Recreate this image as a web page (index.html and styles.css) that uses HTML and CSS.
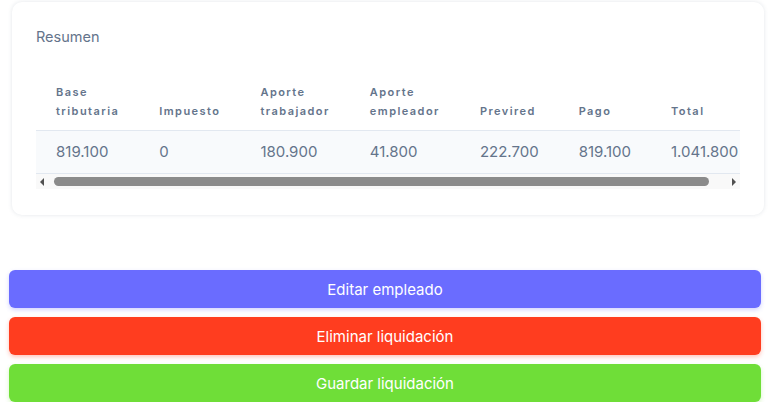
FILE: index.html
```html
<!DOCTYPE html>
<html lang="es">
<head>
    <meta charset="UTF-8">
    <meta name="viewport" content="width=device-width, initial-scale=1.0">
    <title>Liquidación</title>
    <link rel="stylesheet" href="styles.css">
</head>
<body>

    <div id="page">
        <!-- Resumen card -->
        <div class="card">
            <h2 class="card-title">Resumen</h2>
            <div class="table-wrap">
                <table class="summary">
                    <thead>
                        <tr>
                            <th>Base<br>tributaria</th>
                            <th>Impuesto</th>
                            <th>Aporte<br>trabajador</th>
                            <th>Aporte<br>empleador</th>
                            <th>Previred</th>
                            <th>Pago</th>
                            <th>Total</th>
                        </tr>
                    </thead>
                    <tbody>
                        <tr>
                            <td>819.100</td>
                            <td>0</td>
                            <td>180.900</td>
                            <td>41.800</td>
                            <td>222.700</td>
                            <td>819.100</td>
                            <td>1.041.800</td>
                        </tr>
                    </tbody>
                </table>
            </div>
            <!-- horizontal scrollbar of the table -->
            <div class="scrollbar">
                <span class="scroll-btn"><span class="arrow-left"></span></span>
                <span class="scroll-track"><span class="scroll-thumb"></span></span>
                <span class="scroll-btn"><span class="arrow-right"></span></span>
            </div>
        </div>

        <!-- Actions -->
        <div class="actions">
            <button class="btn btn-edit">Editar empleado</button>
            <button class="btn btn-delete">Eliminar liquidación</button>
            <button class="btn btn-save">Guardar liquidación</button>
        </div>
    </div>

</body>
</html>
```

FILE: styles.css
```css
body {
    margin: 0;
    font-family: "Inter", "Noto Sans", Arial, sans-serif;
    background: #fff;
    color: #64748b;
}
#page { padding: 2px 11px 0 9px; }

.card {
    margin-left: 3px;
    background: #fff;
    border-radius: 10px;
    box-shadow: 0 0 4px rgba(100, 116, 139, 0.18);
    padding: 26px 24px 26px 24px;
}
.card-title { margin: 0 0 38px 0; font-size: 14.5px; font-weight: 400; color: #64748b; }

.table-wrap { overflow: hidden; }
.summary { border-collapse: collapse; white-space: nowrap; }
.summary th {
    text-align: left; vertical-align: bottom; font-size: 11px; font-weight: 600;
    letter-spacing: 1.45px; line-height: 19px; padding: 0 20px 9px 20px; color: #64748b;
    border-bottom: 1px solid #e2e8f0;
}
.summary td {
    font-size: 15px; padding: 11px 20px 11px 20px; line-height: 20px;
    background: #f8fafc; border-bottom: 1px solid #e2e8f0; color: #64748b;
}

.scrollbar { display: flex; height: 15px; background: #f9f9f9; }
.scroll-btn { width: 12px; display: flex; align-items: center; justify-content: center; }
.arrow-left { border-right: 4px solid #505050; border-top: 4px solid transparent; border-bottom: 4px solid transparent; }
.arrow-right { border-left: 4px solid #505050; border-top: 4px solid transparent; border-bottom: 4px solid transparent; }
.scroll-track { flex: 1; display: flex; align-items: center; padding: 0 19px 0 6px; }
.scroll-thumb { flex: 1; height: 9px; border-radius: 5px; background: #8b8b8b; }

.actions { margin: 55px 3px 0 0; display: flex; flex-direction: column; gap: 9px; }
.btn {
    height: 38px; border: none; border-radius: 6px; color: #fff; font-size: 15px;
    font-family: inherit; cursor: pointer;
}
.btn-edit { background: #6a6cff; box-shadow: 0 2px 4px rgba(106, 108, 255, 0.3); }
.btn-delete { background: #ff3d1f; box-shadow: 0 2px 4px rgba(255, 61, 31, 0.3); }
.btn-save { background: #6fde38; box-shadow: 0 2px 4px rgba(111, 222, 56, 0.3); }
```
